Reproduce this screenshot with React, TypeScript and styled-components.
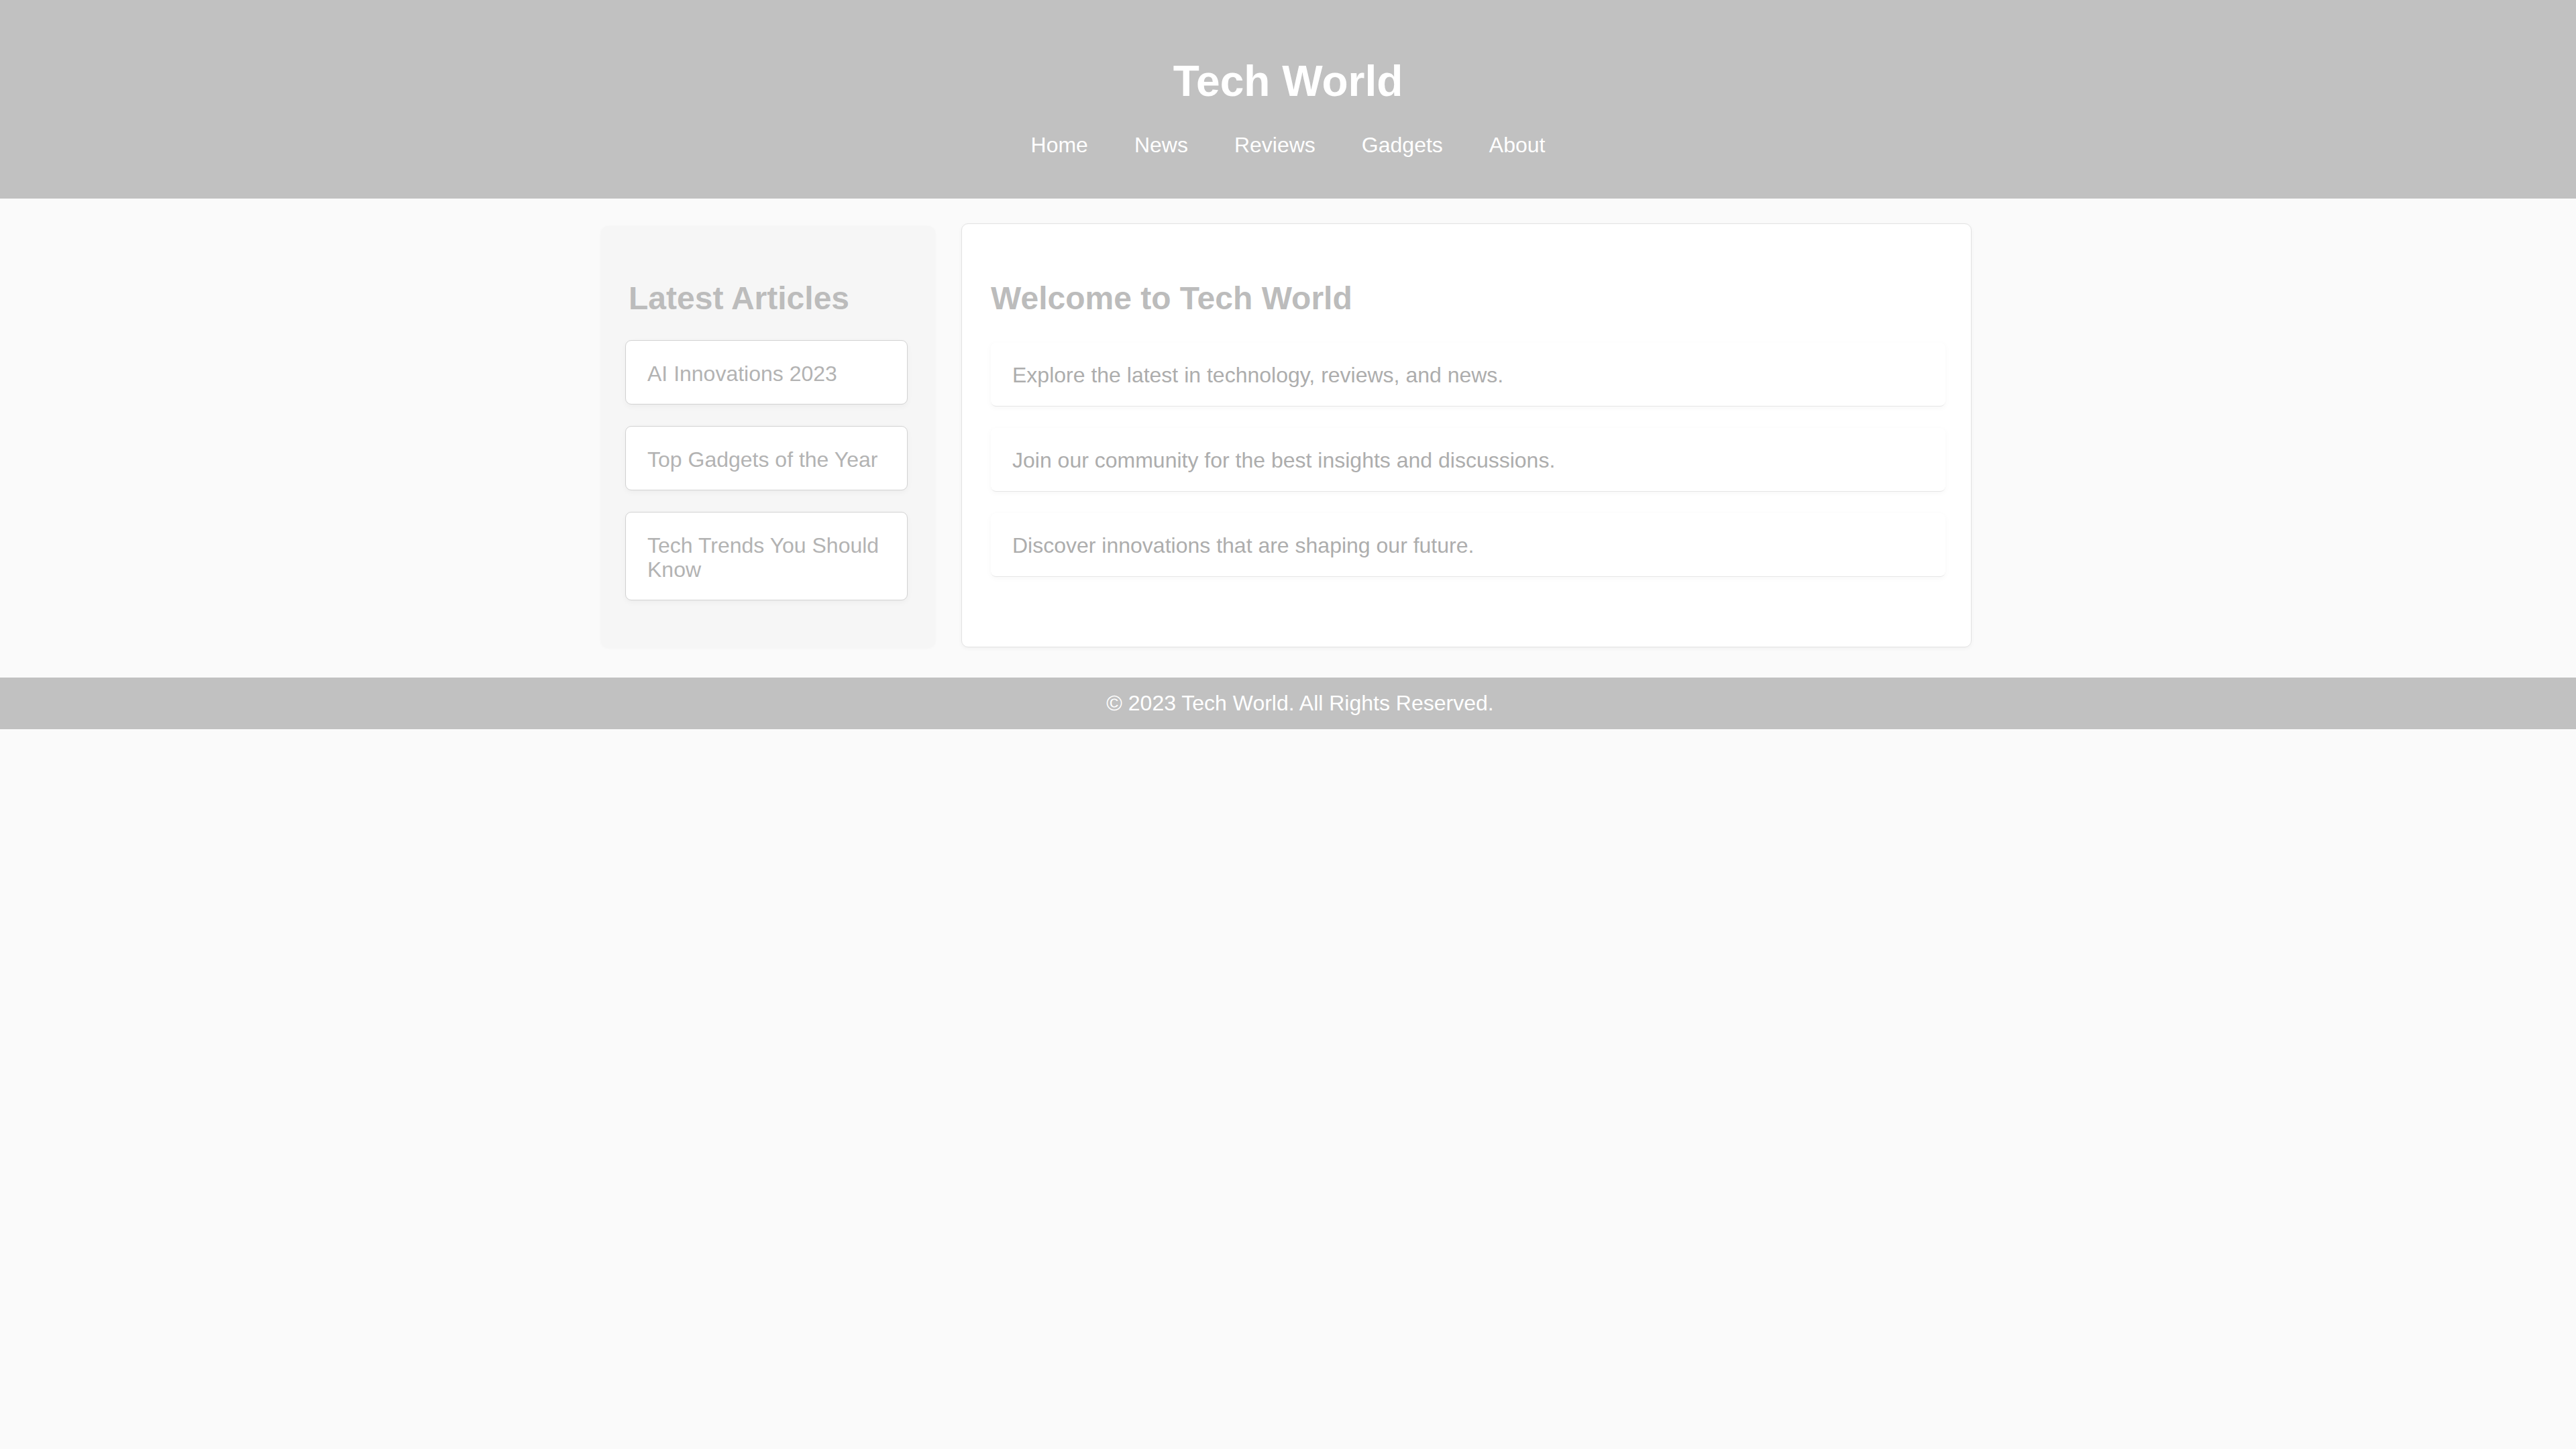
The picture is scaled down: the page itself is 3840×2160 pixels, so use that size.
import React from "react";
import styled, { createGlobalStyle } from "styled-components";

const GlobalStyle = createGlobalStyle`
  html, body {
    margin: 0;
    padding: 0;
    background: #fafafa;
    font-family: "Liberation Sans", Arial, sans-serif;
  }
  * { box-sizing: border-box; }
`;

const Header = styled.header`
  background: #c1c1c1;
  padding: 84px 0 61px;
  text-align: center;
  color: #ffffff;
`;

const Title = styled.h1`
  margin: 0 0 40px;
  font-size: 64px;
  line-height: 74px;
  font-weight: 700;
`;

const Nav = styled.nav`
  display: flex;
  justify-content: center;
  gap: 69px;
`;

const NavLink = styled.a`
  color: #ffffff;
  text-decoration: none;
  font-size: 32px;
  line-height: 37px;
`;

const Main = styled.main`
  display: flex;
  align-items: stretch;
  gap: 39px;
  width: 2043px;
  margin: 0 0 0 calc(50% - 1024px);
  padding: 37px 0 45px;
`;

const Sidebar = styled.aside`
  flex: 0 0 498px;
  margin-top: 4px;
  background: #f6f6f6;
  border-radius: 10px;
  box-shadow: 0 1px 4px rgba(0, 0, 0, 0.03);
  padding: 40px 41px 70px 36px;
`;

const SectionTitle = styled.h2<{ $indent?: number }>`
  margin: 40px 0 ${(p) => (p.$indent ? 35 : 39)}px;
  padding-left: ${(p) => p.$indent ?? 0}px;
  font-size: 48px;
  line-height: 55px;
  font-weight: 700;
  color: #bcbcbc;
`;

const ArticleList = styled.ul`
  list-style: none;
  margin: 0;
  padding: 0;
  display: flex;
  flex-direction: column;
  gap: 32px;
`;

const ArticleItem = styled.li`
  background: #ffffff;
  border: 1px solid #d2d2d2;
  border-radius: 9px;
  box-shadow: 0 3px 8px rgba(0, 0, 0, 0.04);
  padding: 31px 31px 27px 32px;
  font-size: 32px;
  line-height: 36px;
  color: #b3b3b3;
`;

const Content = styled.section`
  flex: 1;
  background: #ffffff;
  border: 1px solid #e2e2e2;
  border-radius: 10px;
  box-shadow: 0 2px 6px rgba(0, 0, 0, 0.04);
  padding: 43px 38px 40px 43px;
`;

const Paragraphs = styled.div`
  display: flex;
  flex-direction: column;
  gap: 32px;
`;

const InfoBox = styled.p`
  margin: 0;
  background: #ffffff;
  border-radius: 8px;
  border-bottom: 1px solid #e6e6e6;
  box-shadow: 0 2px 8px rgba(0, 0, 0, 0.035);
  padding: 30px 32px 28px;
  font-size: 32px;
  line-height: 36px;
  color: #adadad;
`;

const Footer = styled.footer`
  background: #c1c1c1;
  color: #ffffff;
  text-align: center;
  padding: 20px 0 20px 36px;
  font-size: 32px;
  line-height: 37px;
`;

const navItems = ["Home", "News", "Reviews", "Gadgets", "About"];
const articles = ["AI Innovations 2023", "Top Gadgets of the Year", "Tech Trends You Should Know"];
const paragraphs = [
  "Explore the latest in technology, reviews, and news.",
  "Join our community for the best insights and discussions.",
  "Discover innovations that are shaping our future.",
];

export default function App() {
  return (
    <>
      <GlobalStyle />
      <Header>
        <Title>Tech World</Title>
        <Nav>
          {navItems.map((n) => (
            <NavLink key={n} href="#">
              {n}
            </NavLink>
          ))}
        </Nav>
      </Header>
      <Main>
        <Sidebar>
          <SectionTitle $indent={5}>Latest Articles</SectionTitle>
          <ArticleList>
            {articles.map((a) => (
              <ArticleItem key={a}>{a}</ArticleItem>
            ))}
          </ArticleList>
        </Sidebar>
        <Content>
          <SectionTitle>Welcome to Tech World</SectionTitle>
          <Paragraphs>
            {paragraphs.map((p) => (
              <InfoBox key={p}>{p}</InfoBox>
            ))}
          </Paragraphs>
        </Content>
      </Main>
      <Footer>© 2023 Tech World. All Rights Reserved.</Footer>
    </>
  );
}
